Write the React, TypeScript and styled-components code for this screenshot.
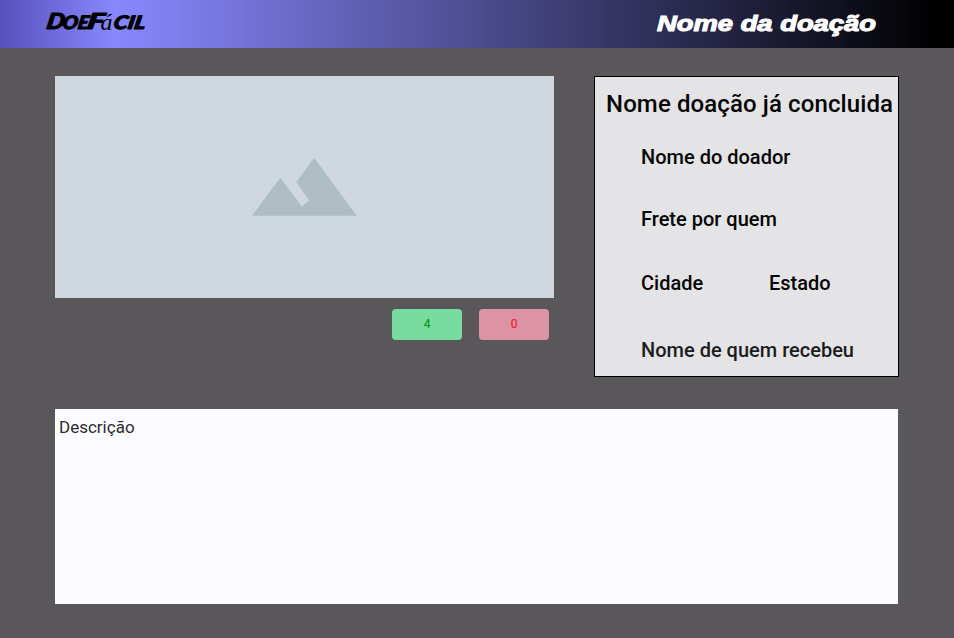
import React from "react";
import styled, { createGlobalStyle } from "styled-components";

const GlobalStyle = createGlobalStyle`
  * { box-sizing: border-box; }
  body { margin: 0; background: #5a575a; font-family: Roboto, sans-serif; }
`;

const Page = styled.div`
  height: 638px;
  background: #5a575a;
  overflow: hidden;
`;

const Header = styled.header`
  height: 48px;
  padding: 0 77px 0 45px;
  display: flex;
  justify-content: space-between;
  background: linear-gradient(90deg, #5650bc 0, #8888ff 115px, #000 938px);
`;

const Logo = styled.svg`
  display: block;
  width: 104px;
  height: 48px;
  overflow: visible;
`;

const Title = styled.svg`
  display: block;
  width: 222px;
  height: 48px;
  overflow: visible;
`;

const Main = styled.main`
  padding: 28px 56px 0 55px;
`;

const Top = styled.section`
  display: flex;
  justify-content: space-between;
  height: 333px;
`;

const Media = styled.div`
  width: 499px;
`;

const Placeholder = styled.div`
  height: 222px;
  background: #cfd8df;
  padding: 82px 0 0 197px;

  svg { display: block; }
`;

const Votes = styled.div`
  display: flex;
  justify-content: flex-end;
  gap: 17px;
  padding: 11px 5px 0 0;
`;

const Vote = styled.button<{ $positive?: boolean }>`
  width: 70px;
  height: 31px;
  padding: 0 0 1px;
  border: 0;
  border-radius: 4px;
  font: 400 12px/30px Roboto, sans-serif;
  background: ${(p) => (p.$positive ? "#78dc9f" : "#dc93a5")};
  color: ${(p) => (p.$positive ? "#089a14" : "#f52030")};
  -webkit-text-stroke: 0.2px currentColor;
`;

const Card = styled.aside`
  width: 305px;
  height: 301px;
  margin-right: -1px;
  padding: 10px 0 0 11px;
  border: 1px solid #000;
  background: #e4e4e6;
  color: #050505;
`;

const CardTitle = styled.h1`
  margin: 0;
  font: 500 24px/34px Roboto, sans-serif;
  letter-spacing: 0.11px;
  white-space: nowrap;
`;

const Row = styled.div<{ $gap: number }>`
  display: flex;
  margin: ${(p) => p.$gap}px 0 0 35px;
`;

const Field = styled.span<{ $width?: number; $soft?: boolean }>`
  font: 500 20px/28px Roboto, sans-serif;
  white-space: nowrap;
  width: ${(p) => (p.$width ? `${p.$width}px` : "auto")};
  color: ${(p) => (p.$soft ? "#1c1c1e" : "#050505")};
`;

const Description = styled.section`
  height: 195px;
  padding: 6px 4px;
  background: #fcfcfe;
  color: #2c2c2e;
  font-size: 17px;
  line-height: 24px;
`;

export default function App() {
  return (
    <Page>
      <GlobalStyle />
      <Header>
        <Logo viewBox="0 0 104 48" role="img" aria-label="DoeFácil">
          <g
            transform="translate(5.5 0) skewX(-10)" fontFamily="Lato, sans-serif" fontWeight="900"
            fontStyle="italic" stroke="#000" strokeWidth="1" strokeLinejoin="round"
          >
            <text x="0.5" y="29.5" fontSize="22" textLength="18" lengthAdjust="spacingAndGlyphs">D</text>
            <text x="16.5" y="29.5" fontSize="18.5" textLength="26" lengthAdjust="spacingAndGlyphs">OE</text>
            <text x="41" y="29.5" fontSize="22" textLength="17" lengthAdjust="spacingAndGlyphs">F</text>
            <text x="67.5" y="29.5" fontSize="18.5" textLength="32" lengthAdjust="spacingAndGlyphs">CIL</text>
          </g>
          <text x="55.5" y="29.5" fontFamily="Liberation Serif, serif" fontStyle="italic" fontSize="24">á</text>
        </Logo>
        <Title viewBox="0 0 222 48" role="img" aria-label="Nome da doação">
          <text
            x="2" y="30.5" fontFamily="Liberation Sans, Arial, sans-serif" fontWeight="700" fontStyle="italic"
            fontSize="22.5" fill="#fff" stroke="#fff" strokeWidth="1.1" textLength="219" lengthAdjust="spacingAndGlyphs"
          >Nome da doação</text>
        </Title>
      </Header>
      <Main>
        <Top>
          <Media>
            <Placeholder>
              <svg width="105" height="58" viewBox="0 0 105 58">
                <path d="M0 57.7 28.3 19.7 49.8 48.3 57.2 42.4 44.2 24.3 62.2 0 104.8 57.7Z" fill="#aebdc4" />
              </svg>
            </Placeholder>
            <Votes>
              <Vote $positive>4</Vote>
              <Vote>0</Vote>
            </Votes>
          </Media>
          <Card>
            <CardTitle>Nome doação já concluida</CardTitle>
            <Row $gap={22}><Field>Nome do doador</Field></Row>
            <Row $gap={34}><Field>Frete por quem</Field></Row>
            <Row $gap={36}><Field $width={128}>Cidade</Field><Field>Estado</Field></Row>
            <Row $gap={39}><Field $soft>Nome de quem recebeu</Field></Row>
          </Card>
        </Top>
        <Description>Descrição</Description>
      </Main>
    </Page>
  );
}
